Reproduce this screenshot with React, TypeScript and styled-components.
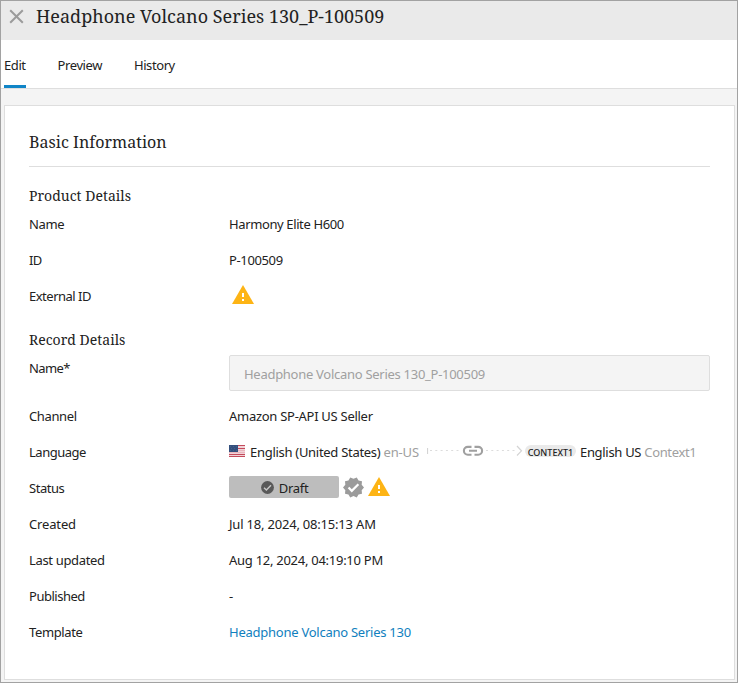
import React from "react";
import styled, { createGlobalStyle } from "styled-components";

const Global = createGlobalStyle`
  * { box-sizing: border-box; }
  body { margin: 0; background: #f4f4f4; }
`;

const Window = styled.div`
  width: 738px;
  height: 683px;
  display: flex;
  flex-direction: column;
  border: 1px solid #a2a2a2;
  background: #f4f4f4;
  color: #222;
  font: 13px/20px "Noto Sans", sans-serif;
  overflow: hidden;
  white-space: nowrap;
`;

const Header = styled.header`
  height: 39px;
  flex: none;
  display: flex;
  align-items: flex-start;
  padding: 2px 0 0 8px;
  gap: 12px;
  background: #eaeaea;
`;

const CloseButton = styled.button`
  display: flex;
  width: 15px;
  height: 24px;
  padding: 6px 0 0;
  border: 0;
  background: none;
`;

const serif = `"Noto Serif", "Droid Serif", "DejaVu Serif", serif`;

const Title = styled.h1`
  margin: 0;
  font: 400 18px/26px ${serif};
  letter-spacing: 0.01px;
`;

const Tabs = styled.nav`
  height: 49px;
  flex: none;
  display: flex;
  gap: 32px;
  padding-left: 3px;
  background: #fff;
  border-bottom: 1px solid #dedede;
`;

const Tab = styled.a<{ $active?: boolean }>`
  height: 48px;
  padding-top: 15px;
  letter-spacing: -0.42px;
  background: ${(p) => (p.$active ? "linear-gradient(#1085c7, #1085c7) 0 100% / 100% 3px no-repeat" : "none")};
`;

const Card = styled.main`
  margin: 16px 2px 0 3px;
  height: 575px;
  flex: none;
  padding: 24px 24px 0;
  border: 1px solid #dedede;
  background: #fff;
`;

const CardTitle = styled.h2`
  margin: 0;
  height: 37px;
  border-bottom: 1px solid #dedede;
  font: 400 16px/24px ${serif};
  letter-spacing: 0.03px;
`;

const Section = styled.section<{ $top: number }>`
  padding-top: ${(p) => p.$top}px;
`;

const SectionTitle = styled.h3`
  margin: 0;
  height: 20px;
  font: 400 14px/20px ${serif};
  letter-spacing: 0.02px;
`;

const Row = styled.div<{ $height?: number }>`
  display: grid;
  grid-template-columns: 200px 1fr;
  height: ${(p) => p.$height ?? 36}px;
  padding-top: 8px;
`;

const Label = styled.span<{ $spacing?: number }>`
  letter-spacing: ${(p) => p.$spacing ?? -0.38}px;
`;

const Value = styled.div`
  display: flex;
  height: 20px;
`;

const Text = styled.span<{ $spacing?: number; $muted?: boolean }>`
  letter-spacing: ${(p) => p.$spacing ?? -0.3}px;
  color: ${(p) => (p.$muted ? "#a0a0a0" : "inherit")};
`;

const Link = styled.a`
  color: #1180be;
  letter-spacing: -0.25px;
`;

const Field = styled.input`
  width: 481px;
  height: 36px;
  margin-top: -3px;
  padding: 2px 14px 0;
  border: 1px solid #dedede;
  border-radius: 2px;
  background: #f4f4f4;
  color: #a0a0a0;
  font: 13px "Noto Sans", sans-serif;
  letter-spacing: -0.28px;
`;

const IconSlot = styled.span<{ $left?: number; $top?: number }>`
  display: flex;
  flex: none;
  height: 24px;
  margin: ${(p) => p.$top ?? 0}px 0 0 ${(p) => p.$left ?? 0}px;
`;

const StatusButton = styled.div`
  display: flex;
  justify-content: center;
  width: 110px;
  height: 22px;
  margin-top: -2px;
  padding: 5px 0 0 1px;
  gap: 5px;
  border-radius: 2px;
  background: #bdbdbd;
  line-height: 15px;
`;

const ContextBadge = styled.span`
  width: 51px;
  height: 12px;
  margin: 3px 4px 0 2px;
  border-radius: 6px;
  background: #eaeaea;
  font-size: 9px;
  font-weight: 500;
  line-height: 15px;
  text-align: center;
`;

const Warning = () => (
  <svg width="22" height="19" viewBox="0 0 22 19">
    <path d="M11 0 22 19H0Z" fill="#fdb415" />
    <path d="M10 8h2v4h-2zM10 14h2v2h-2z" fill="#fff" />
  </svg>
);

const Flag = () => (
  <svg width="16" height="12" viewBox="0 0 16 12" shapeRendering="crispEdges">
    <path fill="#f1d3d8" d="M0 0h16v12H0z" />
    <path fill="#c44b5c" d="M0 0h16v1H0zM9 3h7v1H9zM0 9h16v1H0zM0 11h16v1H0z" />
    <path fill="#e9b6be" d="M9 5h7v1H9zM0 7h16v1H0z" />
    <path fill="#34507e" d="M0 0h9v7H0z" />
    <path fill="#466088" d="M1 1h1v1H1zM4 1h1v1H4zM7 1h1v1H7zM2 3h1v1H2zM5 3h1v1H5zM1 5h1v1H1zM4 5h1v1H4zM7 5h1v1H7z" />
  </svg>
);

const Connector = () => (
  <svg width="96" height="14" viewBox="0 0 96 14" fill="none">
    <path d="M3 6.5h29M59 6.5h29" stroke="#dcdcdc" strokeDasharray="2 3.3" />
    <path d="M.5 4v6M90 2l4.5 4.8L90 11.5" stroke="#d4d4d4" strokeWidth="1.2" />
    <path d="M44.5 2.9h-3.7a3.9 3.9 0 0 0 0 7.8h3.7M47.5 2.9h3.7a3.9 3.9 0 0 1 0 7.8h-3.7M42 6.8h8" stroke="#a0a0a0" strokeWidth="2.1" />
  </svg>
);

const DraftIcon = () => (
  <svg width="13" height="13" viewBox="0 0 13 13">
    <circle cx="6.5" cy="6.5" r="6.4" fill="#595959" />
    <path d="m3 6.8 2.4 2.3 4.6-4.8" fill="none" stroke="#c8c8c8" strokeWidth="1.4" />
  </svg>
);

const Verified = () => (
  <svg width="21" height="21" viewBox="1 1.5 22 21">
    <path fill="#9b9b9b" d="m23 12-2.44-2.79.34-3.69-3.61-.82-1.89-3.2L12 2.96 8.6 1.5 6.71 4.69 3.1 5.5l.34 3.7L1 12l2.44 2.79-.34 3.7 3.61.82L8.6 22.5l3.4-1.47 3.4 1.46 1.89-3.19 3.61-.82-.34-3.69z" />
    <path d="m6.8 12.1 3.4 3.4 6.9-7" fill="none" stroke="#fff" strokeWidth="2.3" />
  </svg>
);

export default function App() {
  return (
    <Window>
      <Global />
      <Header>
        <CloseButton aria-label="Close">
          <svg width="15" height="15" viewBox="0 0 15 15">
            <path d="m1.2 1.2 12.6 12.6M13.8 1.2 1.2 13.8" stroke="#9b9b9b" strokeWidth="2" />
          </svg>
        </CloseButton>
        <Title>Headphone Volcano Series 130_P-100509</Title>
      </Header>
      <Tabs>
        <Tab $active>Edit</Tab>
        <Tab>Preview</Tab>
        <Tab>History</Tab>
      </Tabs>
      <Card>
        <CardTitle>Basic Information</CardTitle>
        <Section $top={19}>
          <SectionTitle>Product Details</SectionTitle>
          <Row>
            <Label>Name</Label>
            <Value><Text $spacing={-0.38}>Harmony Elite H600</Text></Value>
          </Row>
          <Row>
            <Label $spacing={-0.6}>ID</Label>
            <Value><Text $spacing={-0.37}>P-100509</Text></Value>
          </Row>
          <Row>
            <Label $spacing={-0.5}>External ID</Label>
            <Value><IconSlot $left={3} $top={-1}><Warning /></IconSlot></Value>
          </Row>
        </Section>
        <Section $top={16}>
          <SectionTitle>Record Details</SectionTitle>
          <Row $height={48}>
            <Label $spacing={-0.6}>Name*</Label>
            <Value><Field readOnly value="Headphone Volcano Series 130_P-100509" /></Value>
          </Row>
          <Row>
            <Label $spacing={-0.38}>Channel</Label>
            <Value><Text $spacing={-0.28}>Amazon SP-API US Seller</Text></Value>
          </Row>
          <Row>
            <Label $spacing={-0.48}>Language</Label>
            <Value>
              <IconSlot $top={3}><Flag /></IconSlot>
              <IconSlot $left={5} />
              <Text $spacing={-0.29}>English (United States)&nbsp;</Text>
              <Text $muted $spacing={-0.15}>en-US</Text>
              <IconSlot $left={8} $top={2}><Connector /></IconSlot>
              <ContextBadge>CONTEXT1</ContextBadge>
              <Text>English US&nbsp;</Text>
              <Text $muted $spacing={-0.35}>Context1</Text>
            </Value>
          </Row>
          <Row>
            <Label $spacing={-0.45}>Status</Label>
            <Value>
              <StatusButton><DraftIcon /><Text>Draft</Text></StatusButton>
              <IconSlot $left={4} $top={-1}><Verified /></IconSlot>
              <IconSlot $left={4} $top={-1}><Warning /></IconSlot>
            </Value>
          </Row>
          <Row>
            <Label $spacing={-0.15}>Created</Label>
            <Value><Text $spacing={-0.2}>Jul 18, 2024, 08:15:13 AM</Text></Value>
          </Row>
          <Row>
            <Label $spacing={-0.33}>Last updated</Label>
            <Value><Text $spacing={-0.27}>Aug 12, 2024, 04:19:10 PM</Text></Value>
          </Row>
          <Row>
            <Label $spacing={-0.48}>Published</Label>
            <Value><Text>-</Text></Value>
          </Row>
          <Row>
            <Label>Template</Label>
            <Value><Link>Headphone Volcano Series 130</Link></Value>
          </Row>
        </Section>
      </Card>
    </Window>
  );
}
